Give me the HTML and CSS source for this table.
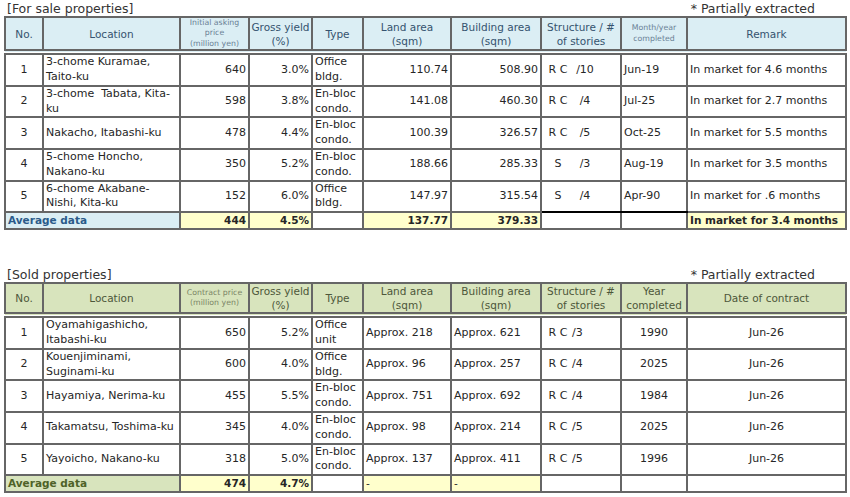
FILE: index.html
```html
<!DOCTYPE html>
<html>
<head>
<meta charset="utf-8">
<title>Properties</title>
<link rel="stylesheet" href="styles.css">
</head>
<body>
<div class="page">
  <section class="block">
    <div class="caption"><span>[For sale properties]</span><span class="note">* Partially extracted</span></div>
    <table class="grid sale">
      <colgroup>
        <col class="c-no"><col class="c-loc"><col class="c-price"><col class="c-yield"><col class="c-type">
        <col class="c-land"><col class="c-bldg"><col class="c-str"><col class="c-month"><col class="c-rem">
      </colgroup>
      <thead>
        <tr class="hd">
          <th>No.</th>
          <th>Location</th>
          <th><span class="sm">Initial asking<br>price<br>(million yen)</span></th>
          <th>Gross yield<br>(%)</th>
          <th>Type</th>
          <th>Land area<br>(sqm)</th>
          <th>Building area<br>(sqm)</th>
          <th>Structure / #<br>of stories</th>
          <th><span class="sm">Month/year<br>completed</span></th>
          <th>Remark</th>
        </tr>
      </thead>
      <tbody>
        <tr class="row">
          <td class="c">1</td><td>3-chome Kuramae,<br>Taito-ku</td><td class="r">640</td><td class="r">3.0%</td><td class="tp">Office<br>bldg.</td>
          <td class="r">110.74</td><td class="r">508.90</td><td class="st"><span class="a">R C</span><span class="b">/10</span></td><td>Jun-19</td><td>In market for 4.6 months</td>
        </tr>
        <tr class="row">
          <td class="c">2</td><td>3-chome&nbsp; Tabata, Kita-<br>ku</td><td class="r">598</td><td class="r">3.8%</td><td class="tp">En-bloc<br>condo.</td>
          <td class="r">141.08</td><td class="r">460.30</td><td class="st"><span class="a">R C</span><span class="b">/4</span></td><td>Jul-25</td><td>In market for 2.7 months</td>
        </tr>
        <tr class="row">
          <td class="c">3</td><td>Nakacho, Itabashi-ku</td><td class="r">478</td><td class="r">4.4%</td><td class="tp">En-bloc<br>condo.</td>
          <td class="r">100.39</td><td class="r">326.57</td><td class="st"><span class="a">R C</span><span class="b">/5</span></td><td>Oct-25</td><td>In market for 5.5 months</td>
        </tr>
        <tr class="row">
          <td class="c">4</td><td>5-chome Honcho,<br>Nakano-ku</td><td class="r">350</td><td class="r">5.2%</td><td class="tp">En-bloc<br>condo.</td>
          <td class="r">188.66</td><td class="r">285.33</td><td class="st"><span class="a">S</span><span class="b">/3</span></td><td>Aug-19</td><td>In market for 3.5 months</td>
        </tr>
        <tr class="row">
          <td class="c">5</td><td>6-chome Akabane-<br>Nishi, Kita-ku</td><td class="r">152</td><td class="r">6.0%</td><td class="tp">Office<br>bldg.</td>
          <td class="r">147.97</td><td class="r">315.54</td><td class="st bk"><span class="a">S</span><span class="b">/4</span></td><td class="bk">Apr-90</td><td>In market for .6 months</td>
        </tr>
        <tr class="avg">
          <td class="lab" colspan="2">Average data</td><td class="y">444</td><td class="y">4.5%</td><td></td>
          <td class="y">137.77</td><td class="y">379.33</td><td></td><td></td><td class="y yl">In market for 3.4 months</td>
        </tr>
      </tbody>
    </table>
  </section>

  <section class="block sold">
    <div class="caption"><span>[Sold properties]</span><span class="note">* Partially extracted</span></div>
    <table class="grid sold-t">
      <colgroup>
        <col class="c-no"><col class="c-loc"><col class="c-price"><col class="c-yield"><col class="c-type">
        <col class="c-land"><col class="c-bldg"><col class="c-str"><col class="c-month"><col class="c-rem">
      </colgroup>
      <thead>
        <tr class="hd">
          <th>No.</th>
          <th>Location</th>
          <th><span class="sm">Contract price<br>(million yen)</span></th>
          <th>Gross yield<br>(%)</th>
          <th>Type</th>
          <th>Land area<br>(sqm)</th>
          <th>Building area<br>(sqm)</th>
          <th>Structure / #<br>of stories</th>
          <th>Year<br>completed</th>
          <th>Date of contract</th>
        </tr>
      </thead>
      <tbody>
        <tr class="row">
          <td class="c">1</td><td>Oyamahigashicho,<br>Itabashi-ku</td><td class="r">650</td><td class="r">5.2%</td><td class="tp">Office<br>unit</td>
          <td>Approx. 218</td><td>Approx. 621</td><td class="st"><span class="a">R C</span><span class="b">/3</span></td><td class="c">1990</td><td class="c">Jun-26</td>
        </tr>
        <tr class="row">
          <td class="c">2</td><td>Kouenjiminami,<br>Suginami-ku</td><td class="r">600</td><td class="r">4.0%</td><td class="tp">Office<br>bldg.</td>
          <td>Approx. 96</td><td>Approx. 257</td><td class="st"><span class="a">R C</span><span class="b">/4</span></td><td class="c">2025</td><td class="c">Jun-26</td>
        </tr>
        <tr class="row">
          <td class="c">3</td><td>Hayamiya, Nerima-ku</td><td class="r">455</td><td class="r">5.5%</td><td class="tp">En-bloc<br>condo.</td>
          <td>Approx. 751</td><td>Approx. 692</td><td class="st"><span class="a">R C</span><span class="b">/4</span></td><td class="c">1984</td><td class="c">Jun-26</td>
        </tr>
        <tr class="row">
          <td class="c">4</td><td>Takamatsu, Toshima-ku</td><td class="r">345</td><td class="r">4.0%</td><td class="tp">En-bloc<br>condo.</td>
          <td>Approx. 98</td><td>Approx. 214</td><td class="st"><span class="a">R C</span><span class="b">/5</span></td><td class="c">2025</td><td class="c">Jun-26</td>
        </tr>
        <tr class="row">
          <td class="c">5</td><td>Yayoicho, Nakano-ku</td><td class="r">318</td><td class="r">5.0%</td><td class="tp">En-bloc<br>condo.</td>
          <td>Approx. 137</td><td>Approx. 411</td><td class="st"><span class="a">R C</span><span class="b">/5</span></td><td class="c">1996</td><td class="c">Jun-26</td>
        </tr>
        <tr class="avg">
          <td class="lab" colspan="2">Average data</td><td class="y">474</td><td class="y">4.7%</td><td></td>
          <td class="y dash">-</td><td class="y dash">-</td><td></td><td></td><td></td>
        </tr>
      </tbody>
    </table>
  </section>
</div>
</body>
</html>
```

FILE: styles.css
```css
html, body {
  margin: 0;
  padding: 0;
  background: #ffffff;
}

body {
  font-family: "DejaVu Sans", Verdana, sans-serif;
  color: #262626;
}

.page {
  padding-left: 4px;
}

.caption {
  display: flex;
  justify-content: space-between;
  align-items: flex-end;
  width: 841px;
  height: 16px;
  box-sizing: border-box;
  padding-left: 3px;
  padding-right: 30px;
  font-size: 12.5px;
  line-height: 15px;
  color: #333333;
}

.sold {
  margin-top: 36px;
}

.grid {
  border-collapse: collapse;
  table-layout: fixed;
  width: 841px;
  font-size: 11px;
}

.c-no { width: 38px; }
.c-loc { width: 137px; }
.c-price { width: 69px; }
.c-yield { width: 63px; }
.c-type { width: 51px; }
.c-land { width: 88px; }
.c-bldg { width: 90px; }
.c-str { width: 80px; }
.c-month { width: 66px; }
.c-rem { width: 159px; }

.grid th,
.grid td {
  border: 2px solid #666666;
  padding: 0 2px;
  line-height: 14.8px;
  white-space: nowrap;
  overflow: visible;
  vertical-align: middle;
  text-align: left;
}

.grid th {
  font-weight: normal;
  font-size: 10.5px;
  text-align: center;
  line-height: 14px;
  padding: 0 1px;
  border-bottom: 6px double #666666;
}

.sale th {
  background: #dbeef4;
  color: #35536f;
}

.sold-t th {
  background: #d8e4bd;
  color: #4d573a;
}

.sm {
  display: block;
  font-size: 7.8px;
  line-height: 10.4px;
  color: #6a8194;
}

.sold-t .sm {
  color: #7b8466;
}

.sale .hd { height: 30px; }
.sold-t .hd { height: 28px; }

.row { height: 29px; }
.avg { height: 17px; }

.grid td.c { text-align: center; }
.grid td.r { text-align: right; }
.grid td.tp { vertical-align: top; }

.grid td.st {
  padding-left: 5px;
}

.st .a {
  display: inline-block;
  width: 22px;
  text-align: center;
}

.st .b {
  display: inline-block;
  width: 24px;
  margin-left: 4px;
  text-align: center;
}

.sold-t .st .b {
  width: auto;
  margin-left: 3px;
  text-align: left;
}

.grid td.bk {
  border-bottom-color: #000000;
}

.avg td {
  font-size: 10.5px;
}

.grid td.lab {
  font-weight: bold;
}

.sale .lab {
  background: #dbeef4;
  color: #2b5b8a;
}

.sold-t .lab {
  background: #d8e4bd;
  color: #4f6228;
}

.grid td.y {
  background: #ffffcc;
  font-weight: bold;
  text-align: right;
}

.grid td.yl {
  text-align: left;
}

.grid td.dash {
  font-weight: normal;
  text-align: left;
}
```
